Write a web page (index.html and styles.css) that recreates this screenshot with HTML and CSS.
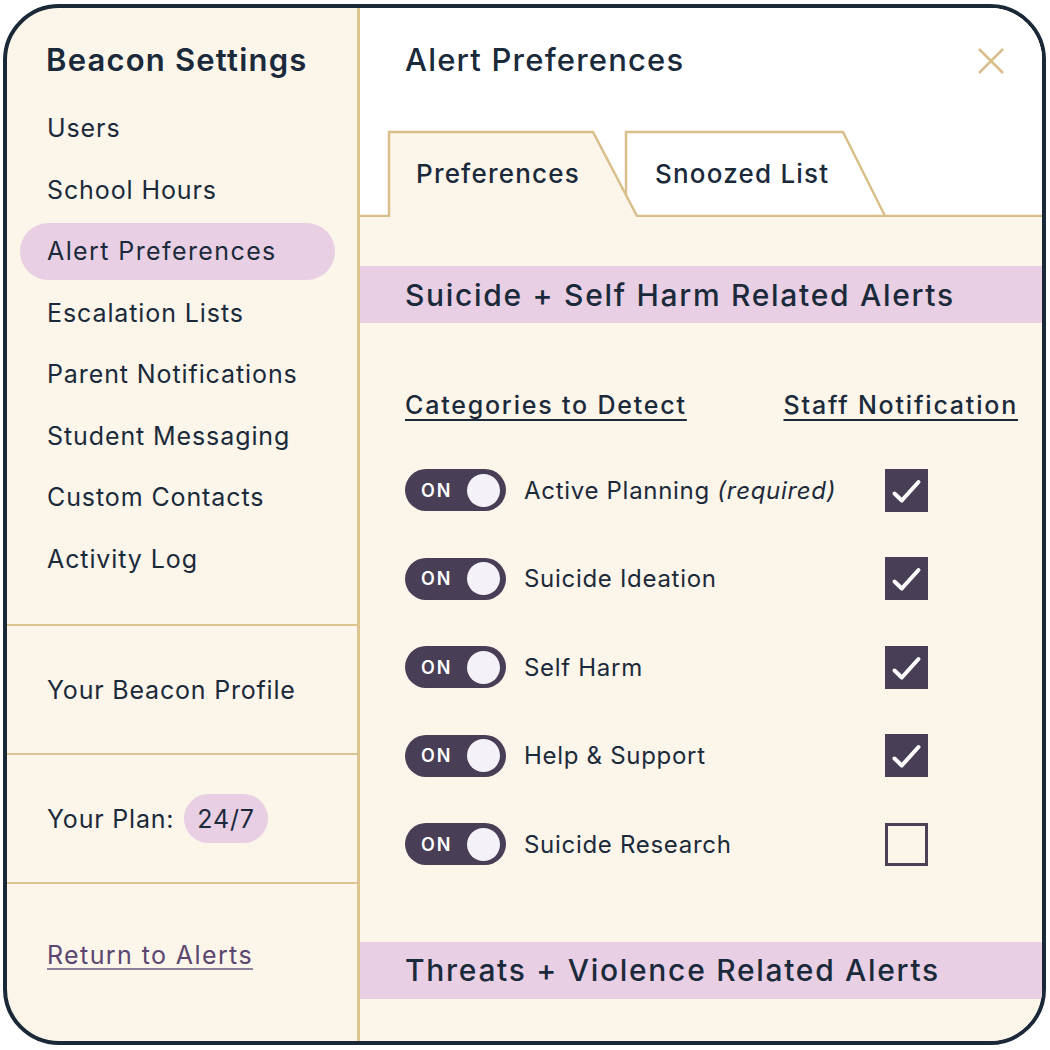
FILE: index.html
```html
<!DOCTYPE html>
<html lang="en">
<head>
    <meta charset="UTF-8">
    <meta name="viewport" content="width=device-width, initial-scale=1.0">
    <title>Beacon Settings - Alert Preferences</title>
    <link rel="stylesheet" href="styles.css">
</head>
<body>
    <div class="frame">
        <!-- Left settings menu -->
        <aside class="sidebar">
            <div class="sidebar-top">
                <h2 class="sidebar-title">Beacon Settings</h2>
                <nav class="nav">
                    <a class="nav-item">Users</a>
                    <a class="nav-item">School Hours</a>
                    <a class="nav-item active">Alert Preferences</a>
                    <a class="nav-item">Escalation Lists</a>
                    <a class="nav-item">Parent Notifications</a>
                    <a class="nav-item">Student Messaging</a>
                    <a class="nav-item">Custom Contacts</a>
                    <a class="nav-item">Activity Log</a>
                </nav>
            </div>
            <div class="sidebar-section">Your Beacon Profile</div>
            <div class="sidebar-section">Your Plan: <span class="plan-pill">24/7</span></div>
            <div class="sidebar-bottom">
                <a class="return-link">Return to Alerts</a>
            </div>
        </aside>

        <!-- Main panel -->
        <main class="panel">
            <div class="panel-header">
                <h1 class="panel-title">Alert Preferences</h1>
                <svg class="close-icon" width="28" height="28" viewBox="0 0 28 28">
                    <path d="M2 2 L26 26 M26 2 L2 26" stroke="#d8bf8c" stroke-width="2.6" fill="none"/>
                </svg>
            </div>

            <div class="tabs">
                <svg class="tabs-bg" width="682" height="87" viewBox="0 0 682 87">
                    <path d="M266 2 L483 2 L525 86 L278 86 Z" fill="#ffffff"/>
                    <path d="M266 86 L266 2 L483 2 L525 86" stroke="#d8bf8c" stroke-width="2.5" fill="none"/>
                    <path d="M29 87 L29 2 L233 2 L277 87 Z" fill="#fcf5ea"/>
                    <path d="M0 86 L29 86 L29 2 L233 2 L277 86 L682 86" stroke="#d8bf8c" stroke-width="2.5" fill="none"/>
                </svg>
                <span class="tab-label first">Preferences</span>
                <span class="tab-label">Snoozed List</span>
            </div>

            <div class="panel-body">
                <div class="band">Suicide + Self Harm Related Alerts</div>

                <div class="table-head">
                    <span class="col-title">Categories to Detect</span>
                    <span class="col-title">Staff Notification</span>
                </div>

                <div class="rows">
                    <div class="row">
                        <div class="row-left">
                            <span class="toggle"><span class="toggle-text">ON</span><span class="knob"></span></span>
                            <span class="row-label">Active Planning <em>(required)</em></span>
                        </div>
                        <span class="check checked">
                            <svg width="43" height="43" viewBox="0 0 43 43"><path d="M9.5 24.5 L16.8 31.5 L33.5 13" stroke="#fff" stroke-width="4" fill="none" stroke-linecap="round" stroke-linejoin="round"/></svg>
                        </span>
                    </div>
                    <div class="row">
                        <div class="row-left">
                            <span class="toggle"><span class="toggle-text">ON</span><span class="knob"></span></span>
                            <span class="row-label">Suicide Ideation</span>
                        </div>
                        <span class="check checked">
                            <svg width="43" height="43" viewBox="0 0 43 43"><path d="M9.5 24.5 L16.8 31.5 L33.5 13" stroke="#fff" stroke-width="4" fill="none" stroke-linecap="round" stroke-linejoin="round"/></svg>
                        </span>
                    </div>
                    <div class="row">
                        <div class="row-left">
                            <span class="toggle"><span class="toggle-text">ON</span><span class="knob"></span></span>
                            <span class="row-label">Self Harm</span>
                        </div>
                        <span class="check checked">
                            <svg width="43" height="43" viewBox="0 0 43 43"><path d="M9.5 24.5 L16.8 31.5 L33.5 13" stroke="#fff" stroke-width="4" fill="none" stroke-linecap="round" stroke-linejoin="round"/></svg>
                        </span>
                    </div>
                    <div class="row">
                        <div class="row-left">
                            <span class="toggle"><span class="toggle-text">ON</span><span class="knob"></span></span>
                            <span class="row-label">Help &amp; Support</span>
                        </div>
                        <span class="check checked">
                            <svg width="43" height="43" viewBox="0 0 43 43"><path d="M9.5 24.5 L16.8 31.5 L33.5 13" stroke="#fff" stroke-width="4" fill="none" stroke-linecap="round" stroke-linejoin="round"/></svg>
                        </span>
                    </div>
                    <div class="row">
                        <div class="row-left">
                            <span class="toggle"><span class="toggle-text">ON</span><span class="knob"></span></span>
                            <span class="row-label">Suicide Research</span>
                        </div>
                        <span class="check"></span>
                    </div>
                </div>

                <div class="band second">Threats + Violence Related Alerts</div>
            </div>
        </main>
    </div>
</body>
</html>
```

FILE: styles.css
```css
body {
    margin: 0;
    background: #fff;
    font-family: 'Inter', 'Noto Sans', sans-serif;
    color: #1b2a3a;
}

.frame {
    box-sizing: border-box;
    width: 1043px;
    height: 1041px;
    margin: 4px 0 0 3px;
    border: 4px solid #1a2838;
    border-radius: 56px;
    overflow: hidden;
    display: grid;
    grid-template-columns: 353px 1fr;
    background: #fcf5ea;
}

/* Sidebar */
.sidebar {
    border-right: 3px solid #dcc48f;
    display: flex;
    flex-direction: column;
}

.sidebar-top {
    padding: 34px 0 37px 13px;
    border-bottom: 2px solid #dcc48f;
}

.sidebar-title {
    margin: 0 0 21.5px 26px;
    font-size: 31px;
    line-height: 36px;
    font-weight: 600;
    letter-spacing: 1.2px;
}

.nav {
    display: flex;
    flex-direction: column;
    gap: 4.5px;
}

.nav-item {
    display: flex;
    align-items: center;
    width: 315px;
    height: 57px;
    box-sizing: border-box;
    padding-left: 27px;
    border-radius: 29px;
    font-size: 25px;
    letter-spacing: 0.9px;
}

.nav-item.active {
    background: #e8cfe4;
    letter-spacing: 1.4px;
}

.sidebar-section {
    height: 127px;
    border-bottom: 2px solid #dcc48f;
    display: flex;
    align-items: center;
    padding-left: 40px;
    font-size: 25px;
    letter-spacing: 0.8px;
}

.plan-pill {
    display: inline-flex;
    align-items: center;
    height: 49px;
    padding: 0 13px;
    margin-left: 10px;
    border-radius: 25px;
    background: #e8cfe4;
}

.sidebar-bottom {
    padding: 56px 0 0 40px;
}

.return-link {
    font-size: 25px;
    letter-spacing: 1.4px;
    color: #5a4670;
    text-decoration: underline;
    text-decoration-thickness: 2px;
    text-underline-offset: 4px;
    text-decoration-color: #8e7f9c;
}

/* Main panel */
.panel {
    background: #fcf5ea;
    display: flex;
    flex-direction: column;
}

.panel-header {
    height: 122px;
    box-sizing: border-box;
    padding: 34px 37px 0 45px;
    background: #fff;
    display: flex;
    justify-content: space-between;
    align-items: flex-start;
}

.panel-title {
    margin: 0;
    font-size: 31px;
    line-height: 36px;
    font-weight: 500;
    letter-spacing: 1.2px;
}

.close-icon {
    margin-top: 5px;
}

.tabs {
    position: relative;
    height: 87px;
    background: #fff;
    display: flex;
    align-items: center;
    padding-left: 56px;
}

.tabs-bg {
    position: absolute;
    left: 0;
    top: 0;
}

.tab-label {
    position: relative;
    font-size: 26px;
    font-weight: 500;
    letter-spacing: 1.2px;
}

.tab-label.first {
    width: 239px;
}

.panel-body {
    display: flex;
    flex-direction: column;
}

.band {
    margin-top: 49px;
    height: 57px;
    display: flex;
    align-items: center;
    padding-left: 45px;
    background: #e8cfe4;
    font-size: 30px;
    font-weight: 500;
    letter-spacing: 1.7px;
    white-space: nowrap;
}

.band.second {
    margin-top: 53px;
}

.table-head {
    margin-top: 67px;
    padding: 0 24px 0 45px;
    display: flex;
    justify-content: space-between;
    line-height: 30px;
}

.col-title {
    font-size: 25px;
    font-weight: 500;
    letter-spacing: 1.8px;
    text-decoration: underline;
    text-decoration-thickness: 2px;
    text-underline-offset: 5px;
    white-space: nowrap;
}

.rows {
    margin-top: 26px;
    padding: 0 24px 0 45px;
}

.row {
    height: 88.5px;
    display: grid;
    grid-template-columns: 1fr 180px;
    align-items: center;
}

.row-left {
    display: flex;
    align-items: center;
    gap: 18px;
}

.toggle {
    box-sizing: border-box;
    width: 101px;
    height: 42px;
    border-radius: 21px;
    background: #483e56;
    display: flex;
    align-items: center;
    justify-content: space-between;
    padding: 0 6px 0 16px;
}

.toggle-text {
    color: #fff;
    font-size: 18px;
    font-weight: 600;
    letter-spacing: 2px;
}

.knob {
    width: 33px;
    height: 33px;
    border-radius: 50%;
    background: #f4f2f8;
}

.row-label {
    font-size: 24px;
    letter-spacing: 0.7px;
    white-space: nowrap;
}

.row-label em {
    font-style: italic;
}

.check {
    justify-self: end;
    margin-right: 90px;
    box-sizing: border-box;
    width: 43px;
    height: 43px;
    border: 3px solid #4c4258;
    display: block;
}

.check.checked {
    border: none;
    background: #483e56;
}

.check svg {
    display: block;
}
```
